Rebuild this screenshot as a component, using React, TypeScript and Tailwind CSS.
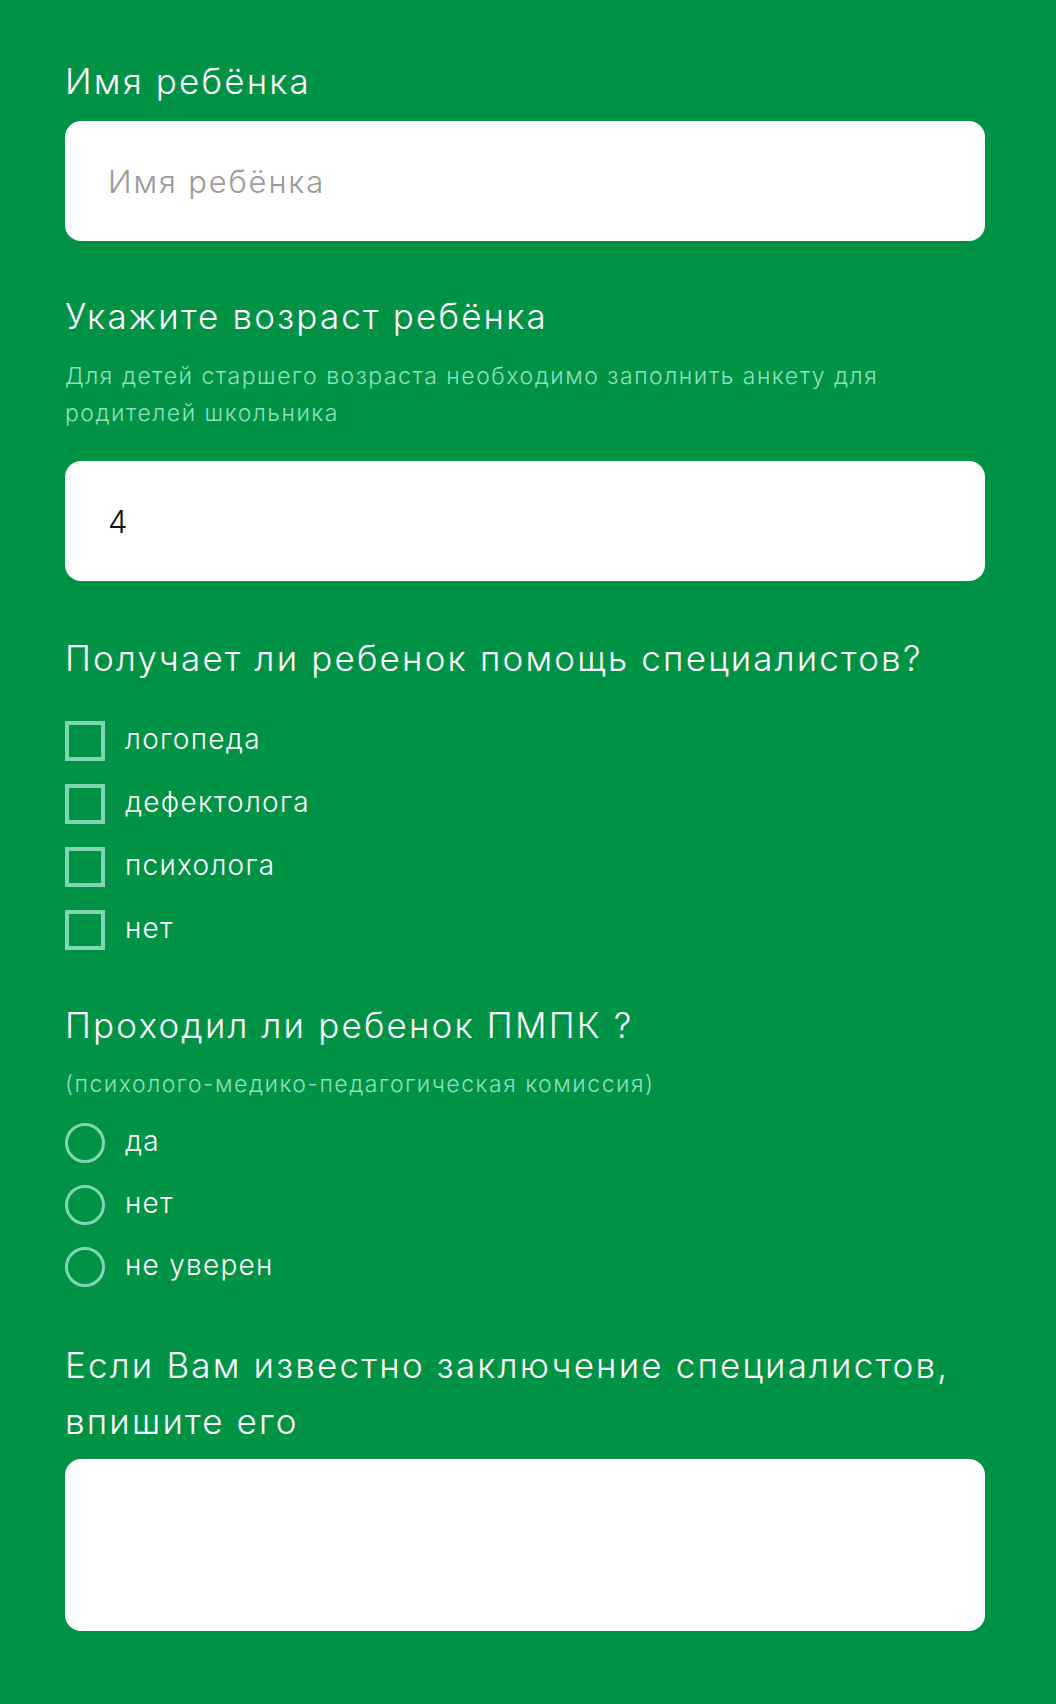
import { useState } from 'react'

const HELP_OPTIONS = ['логопеда', 'дефектолога', 'психолога', 'нет']
const PMPK_OPTIONS = ['да', 'нет', 'не уверен']

const heading = 'text-[35px] leading-[56px] tracking-[0.062em] font-light text-white'
const hint = 'text-[23px] leading-[37px] tracking-[0.066em] font-light text-[#8ee0bf]'
const option = '-mt-1 text-[28px] tracking-[0.045em] font-light text-white'

function Check({ label }: { label: string }) {
  const [on, setOn] = useState(false)
  return (
    <label className="flex items-center gap-[20px] h-10 cursor-pointer" onClick={() => setOn(!on)}>
      <span className="w-10 h-10 border-4 border-[#80d6b2] flex items-center justify-center">
        {on ? <span className="w-4 h-4 bg-white" /> : null}
      </span>
      <span className={option}>{label}</span>
    </label>
  )
}

function Radio({ label, checked, onPick }: { label: string; checked: boolean; onPick: () => void }) {
  return (
    <label className="flex items-center gap-[20px] h-10 cursor-pointer" onClick={onPick}>
      <span className="w-10 h-10 rounded-full border-[3px] border-[#80d6b2] flex items-center justify-center">
        {checked ? <span className="w-4 h-4 rounded-full bg-white" /> : null}
      </span>
      <span className={option}>{label}</span>
    </label>
  )
}

export default function App() {
  const [pmpk, setPmpk] = useState<string | null>(null)

  return (
    <div className="min-h-[1704px] bg-[#009245] font-['Inter',sans-serif]">
      <form className="w-[920px] ml-[65px] pt-[53px] pb-[71px] flex flex-col">
        <div className={heading}>Имя ребёнка</div>
        <input
          className="mt-3 h-[120px] rounded-2xl bg-white px-[43px] text-[31px] tracking-[0.06em] font-light text-[#111] placeholder:text-[#9a9a9a] outline-none"
          placeholder="Имя ребёнка"
        />

        <div className={`${heading} mt-[47px]`}>Укажите возраст ребёнка</div>
        <p className={`${hint} mt-[14px]`}>
          Для детей старшего возраста необходимо заполнить анкету для
          <br />
          родителей школьника
        </p>
        <input
          className="mt-[29px] h-[120px] rounded-2xl bg-white px-[43px] text-[31px] tracking-[0.06em] font-light text-[#111] outline-none"
          defaultValue="4"
        />

        <div className={`${heading} mt-[49px]`}>Получает ли ребенок помощь специалистов?</div>
        <div className="mt-[35px] flex flex-col gap-[23px]">
          {HELP_OPTIONS.map(o => (
            <Check key={o} label={o} />
          ))}
        </div>

        <div className={`${heading} mt-[47px]`}>Проходил ли ребенок ПМПК ?</div>
        <p className={`${hint} mt-[13px]`}>(психолого-медико-педагогическая комиссия)</p>
        <div className="mt-5 flex flex-col gap-[22px]">
          {PMPK_OPTIONS.map(o => (
            <Radio key={o} label={o} checked={pmpk === o} onPick={() => setPmpk(o)} />
          ))}
        </div>

        <div className={`${heading} mt-[50px]`}>
          Если Вам известно заключение специалистов,
          <br />
          впишите его
        </div>
        <textarea className="mt-[10px] h-[172px] rounded-2xl bg-white px-[43px] py-6 text-[31px] font-light text-[#111] outline-none resize-none" />
      </form>
    </div>
  )
}
